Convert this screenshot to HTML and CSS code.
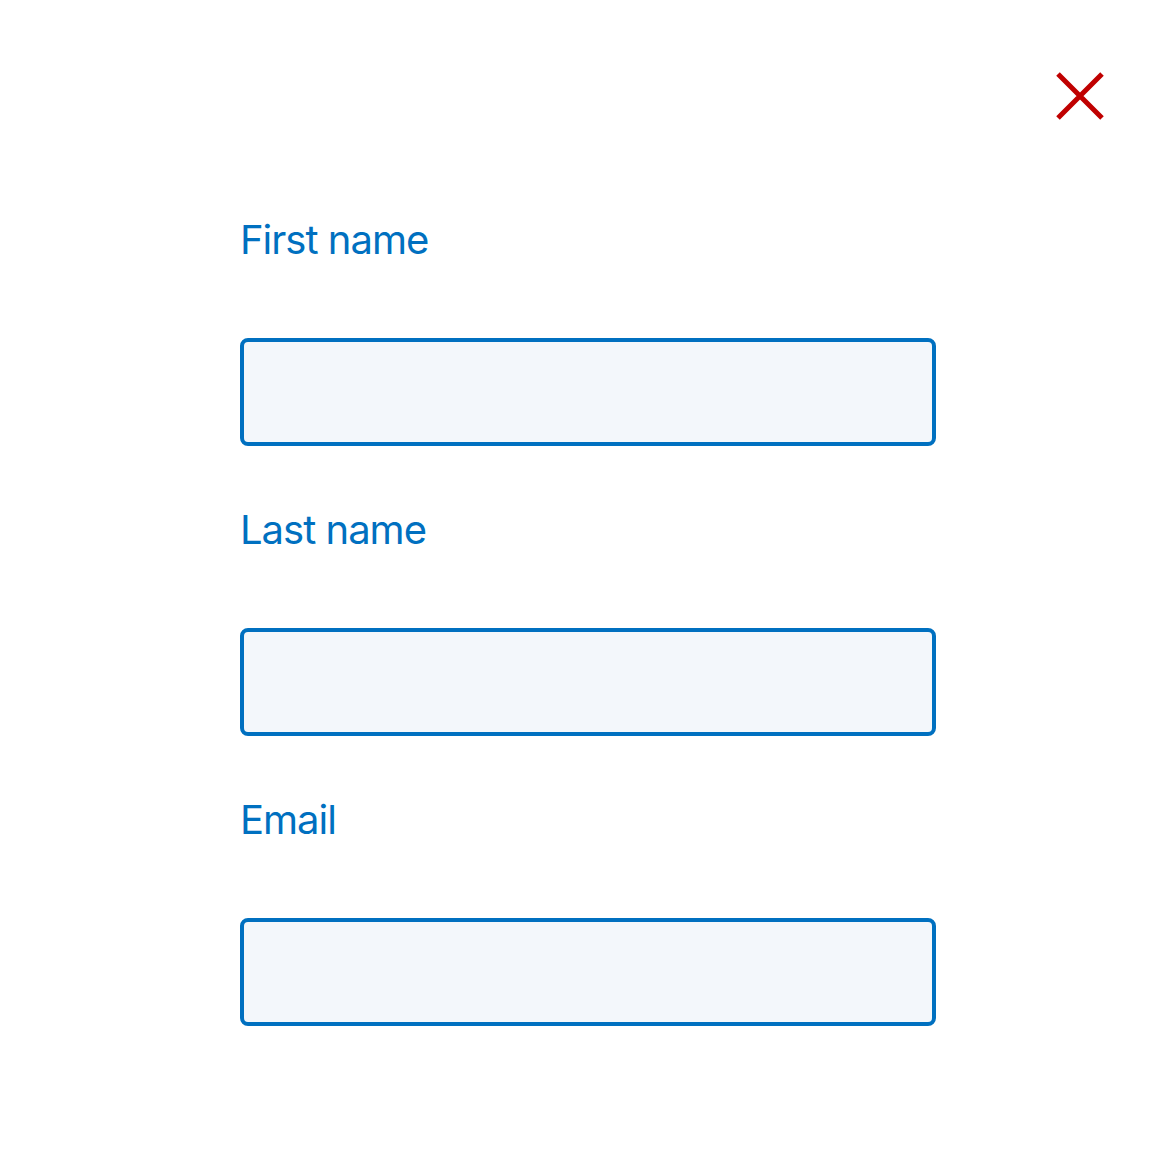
FILE: index.html
```html
<!DOCTYPE html>
<html>
<head>
<meta charset="utf-8">
<link rel="stylesheet" href="styles.css">
</head>
<body>
<div class="page">
  <div class="topbar">
    <button class="close" aria-label="Close">
      <svg width="48" height="48" viewBox="0 0 48 48"><path d="M2 2 L46 46 M46 2 L2 46" stroke="#c00000" stroke-width="5" fill="none"/></svg>
    </button>
  </div>
  <form class="form">
    <div class="field">
      <label class="label">First name</label>
      <input class="input" type="text">
    </div>
    <div class="field">
      <label class="label">Last name</label>
      <input class="input" type="text">
    </div>
    <div class="field">
      <label class="label">Email</label>
      <input class="input" type="email">
    </div>
  </form>
</div>
</body>
</html>
```
FILE: styles.css
```css
html, body { margin: 0; padding: 0; background: #fff; }
body { font-family: Inter, "Noto Sans", sans-serif; }
.page { width: 1176px; height: 1176px; }
.topbar { display: flex; justify-content: flex-end; padding: 72px 72px 0 0; height: 48px; }
.close { width: 48px; height: 48px; padding: 0; border: 0; background: none; display: block; }
.close svg { display: block; }
.form { display: flex; flex-direction: column; gap: 60px; margin: 96px 0 0 240px; width: 696px; }
.field { display: flex; flex-direction: column; gap: 74px; }
.label { color: #0070c0; font-size: 40px; line-height: 48px; font-weight: 400; letter-spacing: -1px; }
.input { box-sizing: border-box; height: 108px; width: 696px; border: 4px solid #0070c0; border-radius: 8px; background: #f3f7fb; margin: 0; }
```
